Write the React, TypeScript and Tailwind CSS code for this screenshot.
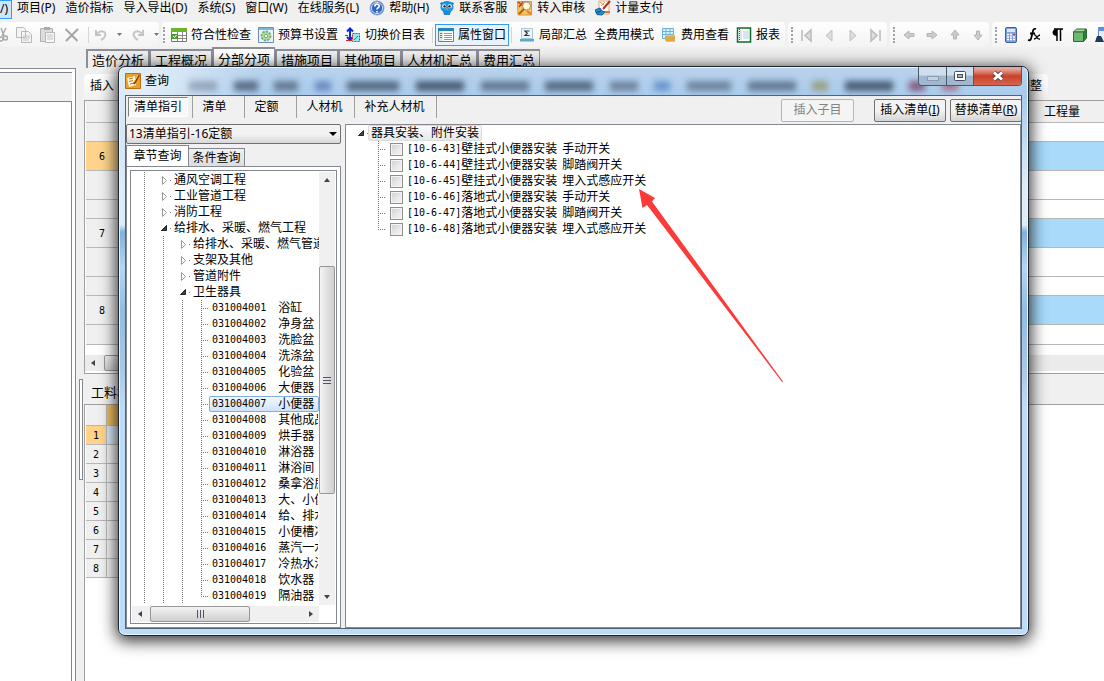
import type { ReactNode } from "react"
import clsx from "clsx"

const topTabs = ["造价分析", "工程概况", "分部分项", "措施项目", "其他项目", "人材机汇总", "费用汇总"]

const gridRows = [
    { h: "h-[19px]" },
    { h: "h-[29px]", no: "6", active: true, blue: true },
    { h: "h-[29px]" },
    { h: "h-[19px]" },
    { h: "h-[29px]", no: "7", blue: true },
    { h: "h-[29px]" },
    { h: "h-[19px]" },
    { h: "h-[29px]", no: "8", blue: true },
    { h: "h-[20px]" },
]

const branches = [
    { level: 1, name: "通风空调工程" },
    { level: 1, name: "工业管道工程" },
    { level: 1, name: "消防工程" },
    { level: 1, name: "给排水、采暖、燃气工程", open: true },
    { level: 2, name: "给排水、采暖、燃气管道" },
    { level: 2, name: "支架及其他" },
    { level: 2, name: "管道附件" },
    { level: 2, name: "卫生器具", open: true },
]

const leaves = [
    "浴缸", "净身盆", "洗脸盆", "洗涤盆", "化验盆", "大便器", "小便器", "其他成品", "烘手器", "淋浴器",
    "淋浴间", "桑拿浴房", "大、小便槽", "给、排水附件", "小便槽冲洗管", "蒸汽一水加热器", "冷热水混合器", "饮水器", "隔油器",
]

const quotas = [
    ["[10-6-43]", "壁挂式小便器安装", "手动开关"],
    ["[10-6-44]", "壁挂式小便器安装", "脚踏阀开关"],
    ["[10-6-45]", "壁挂式小便器安装", "埋入式感应开关"],
    ["[10-6-46]", "落地式小便器安装", "手动开关"],
    ["[10-6-47]", "落地式小便器安装", "脚踏阀开关"],
    ["[10-6-48]", "落地式小便器安装", "埋入式感应开关"],
]

// blurred toolbar showing through the glass title bar
const ghosts = [
    "w-7 bg-slate-600/40", "w-6 bg-slate-700/70", "w-6 bg-slate-700/60", "w-4 bg-[#3c5fa8]/60", "w-13 bg-slate-700/70",
    "w-12 bg-slate-700/80", "w-12 bg-slate-700/60", "w-12 bg-slate-700/70", "w-7 bg-slate-600/60", "w-4 bg-[#3c6fb8]/60",
    "w-11 bg-slate-600/60", "w-12 bg-slate-700/60", "w-4 bg-[#8f8f58]/70", "w-12 bg-slate-700/80", "w-4 bg-[#7a3f68]/80",
    "w-4 bg-[#a04f68]/70",
]

function Mono({ children }: { children: ReactNode }) {
    return <span className="font-['DejaVu_Sans_Mono',monospace] text-[10px]">{children}</span>
}

function Icon({ children, size = 16 }: { children: ReactNode; size?: number }) {
    return (
        <svg width={size} height={size} viewBox="0 0 16 16" fill="none" className="shrink-0" aria-hidden="true">
            {children}
        </svg>
    )
}

function HelpIcon() {
    return (
        <Icon>
            <circle cx="8" cy="8" r="7" fill="#2f63c8" stroke="#8ba6d8" />
            <circle cx="8" cy="8" r="5.6" stroke="#fff" strokeWidth=".8" />
            <path d="M5.8 6.4c0-3 4.6-2.8 4.4-.2C10.100 7.800 8 7.800 8 9.600M8 11v1.600" stroke="#fff" strokeWidth="1.700" />
        </Icon>
    )
}

function MascotIcon() {
    return (
        <Icon>
            <path d="M1 3c2-1 3-1 5 0l-3 4zM15 3c-2-1-3-1-5 0l3 4z" fill="#1672b8" />
            <path d="M8 1c4 0 6.500 2.500 6.500 6S12 12.500 8 12.500 1.500 10.500 1.500 7 4 1 8 1z" fill="#2196de" />
            <path d="M4 11h8l-1 4H5z" fill="#2486cc" />
            <circle cx="5.200" cy="6.200" r="2" fill="#fff" />
            <circle cx="10.800" cy="6.200" r="2" fill="#fff" />
            <circle cx="5.500" cy="6.400" r="1.200" fill="#112" />
            <circle cx="10.500" cy="6.400" r="1.200" fill="#112" />
            <path d="M6.500 8.500h3L8 10z" fill="#f5a623" />
        </Icon>
    )
}

function AuditIcon() {
    return (
        <Icon>
            <path d="M.5 1.500h14v13.500H1z" fill="#f6c35e" stroke="#d9982e" />
            <path d="M1 2l5 4M6 2L2 7" stroke="#c8421a" strokeWidth="1.500" />
            <circle cx="9.500" cy="6" r="4" fill="#fff6dd" stroke="#a39064" />
            <path d="M7 9l-5 5" stroke="#b35a12" strokeWidth="2" />
            <path d="M10 11l4 3" stroke="#e8782a" strokeWidth="2" />
        </Icon>
    )
}

function PayIcon() {
    return (
        <Icon>
            <path d="M4 1h10v13H4z" fill="#fff" stroke="#e0a878" />
            <path d="M5 2l4 3M10 2L6 6" stroke="#e0905a" />
            <path d="M15 1L8 9" stroke="#b8301c" strokeWidth="2" />
            <path d="M0 10l5-2 2 3 3 1-3 3-5-.5z" fill="#2a8fd0" stroke="#135a94" />
            <path d="M1 13l5-2" stroke="#0c5d98" strokeWidth="1.500" />
            <path d="M10 12h5" stroke="#e0782a" strokeWidth="2" />
        </Icon>
    )
}

function TableIcon() {
    return (
        <Icon>
            <path d="M.5 1.500h15v13H.5z" fill="#fff" stroke="#777" />
            <path d="M0 1h16v4H0z" fill="#6cb52a" />
            <path d="M1 8.500h14M1 11.500h14M6.500 5v9M11.500 5v9" stroke="#888" />
            <path d="M1 7h6v5H1z" fill="#4d9a2f" />
            <path d="M2 9l1.500 1.500L5.500 8" stroke="#fff" />
        </Icon>
    )
}

function GearIcon() {
    return (
        <Icon>
            <path d="M.5.500h15v15H.5z" fill="#e8f1f6" stroke="#6b8fb5" />
            <path d="M1 1h14v2H1z" fill="#7db4e0" />
            <circle cx="8" cy="9" r="4.500" fill="#b8dcae" stroke="#6fae68" strokeWidth="1.800" strokeDasharray="2.200 1.200" />
            <circle cx="8" cy="9" r="1.800" fill="#fff" stroke="#6fae68" />
        </Icon>
    )
}

function SwitchIcon() {
    return (
        <Icon>
            <path d="M5 1v13M2 4.500L5 1.500l3 3M2 10l3 3 3-3" stroke="#0a28d8" strokeWidth="2" />
            <path d="M7.500 6.500h7v8h-7z" fill="#8eecf0" stroke="#e02020" strokeDasharray="2 1" />
            <path d="M0 8.500h3M1 13.500h6" stroke="#e02020" />
            <path d="M9 13l4-4" stroke="#138b9b" />
        </Icon>
    )
}

function PropsIcon() {
    return (
        <Icon>
            <path d="M.5 1.500h15v13H.5z" fill="#fff" stroke="#6d7f8f" />
            <path d="M0 1h16v3H0z" fill="#2585b0" />
            <path d="M1 4h4v10H1z" fill="#dce9dc" />
            <path d="M6 6.500h8M6 8.500h8M6 10.500h8M6 12.500h8" stroke="#8d999d" />
            <path d="M2 6.500h2M2 8.500h2M2 10.500h2" stroke="#3d9b4c" />
        </Icon>
    )
}

function SumIcon() {
    return (
        <Icon>
            <path d="M2.500 1.500h11v10h-11z" fill="#eaf6fb" stroke="#a5c7d4" />
            <path d="M10.500 4H6l2.300 2.200L6 8.500h4.500" stroke="#333" strokeWidth="1.200" />
            <path d="M1 12h14v2.500H1z" fill="#58a8d0" />
        </Icon>
    )
}

function CoinsIcon() {
    return (
        <Icon>
            <path d="M1.500 1.500h11v10h-11z" fill="#d9f0fa" stroke="#6ab3d5" />
            <path d="M1 4.500h12M1 7.500h12M5 1v11M9 1v11" stroke="#6ab3d5" />
            <path d="M4 8h10v6H4z" fill="#f5c96a" />
            <path d="M4 10h10M4 12h10M5 14h9" stroke="#c08a2c" />
        </Icon>
    )
}

function ReportIcon() {
    return (
        <Icon>
            <path d="M1.500 1h13v14h-13z" fill="#fff" stroke="#0b6b28" strokeWidth="1.500" />
            <path d="M5 3v10M7 5h6M7 7h6M7 9h6M7 11h6" stroke="#b4c6dc" />
            <path d="M3.500 2v12" stroke="#555" strokeDasharray="1 1" />
        </Icon>
    )
}

function AppIcon() {
    return (
        <Icon>
            <path d="M.5.500h15v15H.5z" fill="#e8a02c" stroke="#c06c10" />
            <path d="M2 5l8-2 1 9-7 2z" fill="#fff8df" />
            <path d="M4 6l4-1M4 8.500l4-1M5 11l4-1" stroke="#b87428" />
            <path d="M14 2l-5 9" stroke="#8a3e06" strokeWidth="2" />
            <path d="M13 2l-4 7" stroke="#ffd45c" />
        </Icon>
    )
}

function Band({ children, className }: { children: ReactNode; className?: string }) {
    return (
        <div className={clsx("flex h-[25px] shrink-0 items-center rounded bg-linear-to-b from-white to-[#f3f3f3]", className)}>
            {children}
        </div>
    )
}

function Grip() {
    return <span className="-mr-px h-4 shrink-0 border-l-2 border-dotted border-gray-400" />
}

function Sep({ className }: { className?: string }) {
    return <span className={clsx("h-4 w-px shrink-0 bg-gray-300", className)} />
}

function ToolButton({ icon, text }: { icon?: ReactNode; text: string }) {
    return (
        <button className="flex shrink-0 items-center gap-1 whitespace-nowrap">
            {icon}
            {text}
        </button>
    )
}

function GlyphButton({ label, children }: { label: string; children: ReactNode }) {
    return (
        <button aria-label={label} className="shrink-0">
            <Icon>{children}</Icon>
        </button>
    )
}

function Caret() {
    return (
        <svg width="5" height="3" className="shrink-0" aria-hidden="true">
            <path d="M0 0h5L2.500 3z" fill="#777" />
        </svg>
    )
}

function Guide({ kind }: { kind: "line" | "tee" | "end" }) {
    const wide = kind !== "line"
    return (
        <svg width={wide ? 17 : 19} height="16" className="shrink-0" aria-hidden="true">
            <path d={kind === "end" ? "M9.500 0v9" : "M9.500 0v16"} stroke="#777" strokeDasharray="1 1" />
            {wide && <path d="M11 8.500h6" stroke="#777" strokeDasharray="1 1" />}
        </svg>
    )
}

function Expander({ open }: { open?: boolean }) {
    return (
        <svg width="17" height="16" className="shrink-0 overflow-visible" aria-hidden="true">
            {open ? <path d="M12.500 5.500v5H7.500z" fill="#444" stroke="#222" /> : <path d="M8.500 4.500v8l4-4z" fill="#fff" stroke="#999" />}
            <path d="M16 8.500h1" stroke="#777" />
        </svg>
    )
}

function ScrollArrow({ d }: { d: string }) {
    return (
        <span className="flex size-4 shrink-0 items-center justify-center">
            <svg width="8" height="8" aria-hidden="true">
                <path d={d} fill="#444" />
            </svg>
        </span>
    )
}

function MenuBar() {
    return (
        <nav className="flex h-[22px] items-start gap-[10px] whitespace-nowrap leading-4">
            <a href="#view" className="h-[19px] w-3 shrink-0 border border-l-0 border-[#3399ff] bg-[#cde6fc]">/)</a>
            <a href="#project" className="-ml-[5px]">项目(P)</a>
            <a href="#index">造价指标</a>
            <a href="#io">导入导出(D)</a>
            <a href="#system">系统(S)</a>
            <a href="#window">窗口(W)</a>
            <a href="#online">在线服务(L)</a>
            <a href="#help" className="flex gap-1"><HelpIcon />帮助(H)</a>
            <a href="#service" className="flex gap-1"><MascotIcon />联系客服</a>
            <a href="#audit" className="flex gap-1"><AuditIcon />转入审核</a>
            <a href="#pay" className="flex gap-1"><PayIcon />计量支付</a>
        </nav>
    )
}

function Toolbar() {
    return (
        <div className="flex gap-[3px] overflow-hidden">
            <Band className="w-[159px] gap-2">
                <div className="flex w-2 shrink-0 justify-end overflow-hidden">
                    <GlyphButton label="剪切">
                        <path d="M9 1l3 8M14 1l-4 8" stroke="#aaa" strokeWidth="1.500" />
                        <circle cx="9" cy="12" r="2" stroke="#aaa" strokeWidth="1.500" />
                        <circle cx="13.500" cy="11" r="2" stroke="#aaa" strokeWidth="1.500" />
                    </GlyphButton>
                </div>
                <GlyphButton label="复制">
                    <path d="M.5.500h7l2 2v8h-9zM5.500 4.500h7l3 3v8h-10z" fill="#f4f4f4" stroke="#b8b8b8" />
                    <path d="M7 9h7M7 11h7M7 13h6" stroke="#c4c4c4" />
                </GlyphButton>
                <GlyphButton label="粘贴">
                    <path d="M.5 1.500h12v13H.5z" fill="#ddd" stroke="#b0b0b0" />
                    <path d="M4 0h6v3H4z" fill="#aaa" />
                    <path d="M5.500 5.500h9v10h-9z" fill="#f8f8f8" stroke="#b8b8b8" />
                    <path d="M7 8h6M7 10h6M7 12h6" stroke="#c4c4c4" />
                </GlyphButton>
                <GlyphButton label="删除">
                    <path d="M1.500 2l12 12M14 2L2 14" stroke="#a5a5a5" strokeWidth="2" />
                </GlyphButton>
                <Sep className="-mr-1" />
                <GlyphButton label="撤销">
                    <path d="M3 3v5h5M4 7c4-5 10-2 8 2-.6 2-2 3-4 4" stroke="#c4c4c4" strokeWidth="2" />
                </GlyphButton>
                <Caret />
                <GlyphButton label="恢复">
                    <path d="M13 3v5H8M12 7C8 2 2 5 4 9c.6 2 2 3 4 4" stroke="#c4c4c4" strokeWidth="2" />
                </GlyphButton>
                <Caret />
            </Band>
            <Band className="gap-[7px] pl-px pr-[5px]">
                <Grip />
                <ToolButton icon={<TableIcon />} text="符合性检查" />
                <ToolButton icon={<GearIcon />} text="预算书设置" />
                <ToolButton icon={<SwitchIcon />} text="切换价目表" />
                <div className="flex items-center gap-0.5">
                    <Sep />
                    <button className="flex h-[22px] items-center gap-1 border border-[#3399ff] bg-[#e8f2fc] px-0.5">
                        <PropsIcon />
                        属性窗口
                    </button>
                    <Sep />
                </div>
                <ToolButton icon={<SumIcon />} text="局部汇总" />
                <ToolButton text="全费用模式" />
                <ToolButton icon={<CoinsIcon />} text="费用查看" />
                <ToolButton icon={<ReportIcon />} text="报表" />
            </Band>
            <Band className="gap-[7px] px-[3px]">
                <Grip />
                <GlyphButton label="首条"><path d="M3 3v11M12 3v11L6 8.500z" fill="#ddd" stroke="#bbb" strokeWidth="1.500" /></GlyphButton>
                <GlyphButton label="上一条"><path d="M10 3v11L4 8.500z" fill="#ddd" stroke="#c0c0c0" /></GlyphButton>
                <GlyphButton label="下一条"><path d="M5 3v11l6-5.500z" fill="#ddd" stroke="#c0c0c0" /></GlyphButton>
                <GlyphButton label="末条"><path d="M12 3v11M3 3v11l6-5.500z" fill="#ddd" stroke="#bbb" strokeWidth="1.500" /></GlyphButton>
            </Band>
            <Band className="gap-[7px] px-[3px]">
                <Grip />
                <GlyphButton label="左移"><path d="M3 8l5-4v2.500h5v3H8V12z" fill="#ccc" stroke="#b4b4b4" /></GlyphButton>
                <GlyphButton label="右移"><path d="M13 8L8 4v2.500H3v3h5V12z" fill="#ccc" stroke="#b4b4b4" /></GlyphButton>
                <GlyphButton label="上移"><path d="M8 3l4 5H9.500v4h-3V8H4z" fill="#ccc" stroke="#b4b4b4" /></GlyphButton>
                <GlyphButton label="下移"><path d="M8 13l4-5H9.500V4h-3v4H4z" fill="#ccc" stroke="#b4b4b4" /></GlyphButton>
            </Band>
            <Band className="grow gap-[7px] pl-[3px]">
                <Grip />
                <GlyphButton label="计算器">
                    <rect x="2.500" y=".5" width="11" height="15" rx="1.500" fill="#7fa0dc" stroke="#3f5f9f" />
                    <path d="M4 2h8v3H4z" fill="#dbe8fb" />
                    <path d="M4 7.500h8M4 10h8M4 12.500h8" stroke="#fff" strokeWidth="1.500" strokeDasharray="2 1" />
                    <path d="M10 7.500h2" stroke="#e03030" strokeWidth="1.500" />
                </GlyphButton>
                <GlyphButton label="函数">
                    <path d="M10 2c-3-1-3 2-4 6s-1 6-4 5M4 6.500h5" stroke="#000" strokeWidth="1.800" />
                    <path d="M8 8c3-1 2 5 6 4M14 8c-2 0-3 4-6 4" stroke="#000" strokeWidth="1.300" />
                </GlyphButton>
                <GlyphButton label="段落标记">
                    <path d="M8 2v12M11.500 2v12M5 2h9" stroke="#000" strokeWidth="1.500" />
                    <path d="M8 2v7C2 9 2 2 8 2z" fill="#000" />
                </GlyphButton>
                <GlyphButton label="三维">
                    <path d="M1.500 5l3-3h10l-3 3z" fill="#a8dba0" stroke="#2f6a35" />
                    <path d="M1.500 5h10v9.500h-10z" fill="#6fb872" stroke="#2f6a35" />
                    <path d="M11.500 5l3-3v9l-3 3.500z" fill="#2f7a3a" stroke="#2f6a35" />
                </GlyphButton>
                <GlyphButton label="查找">
                    <path d="M3.500.5h12v14h-12z" fill="#e4eefc" stroke="#5f86c8" />
                    <path d="M3 1h13v3H3z" fill="#5f8fe0" />
                    <path d="M0 15l2-6h4l3 6z" fill="#223a52" />
                </GlyphButton>
            </Band>
        </div>
    )
}

function LeftPanel() {
    return (
        <div className="mt-[21px] flex w-[76px] shrink-0 flex-col border-r border-t border-[#828790] bg-white pr-[3px] pt-[3px]">
            <div className="h-[29px] border-t border-[#828790] bg-[#f0f0f0]" />
            <div className="grow border-r border-t border-[#828790]" />
        </div>
    )
}

function MainArea() {
    return (
        <main className="flex min-w-0 grow flex-col">
            <div className="flex h-[21px] shrink-0 items-end pl-0.5">
                {topTabs.map((tab) => (
                    <button
                        key={tab}
                        className={clsx(
                            "whitespace-nowrap border-l-2 border-r border-t-2 border-[#8d8f98] px-1 pt-px text-[13px] leading-4",
                            tab === "分部分项" ? "h-[21px] bg-white" : "h-[19px] bg-[#efefef]"
                        )}
                    >
                        {tab}
                    </button>
                ))}
            </div>
            <div className="mb-0.5 mr-14 mt-1.5 flex h-6 shrink-0 items-center justify-between rounded bg-linear-to-b from-white to-[#f2f2f2] px-[6px]">
                <button>插入</button>
                <button>调整</button>
            </div>
            <div className="flex h-[274px] shrink-0 flex-col border-y border-l border-[#a0a0a0] bg-white">
                <table className="w-full table-fixed border-separate border-spacing-0 pl-px">
                    <thead>
                        <tr className="h-[22px] bg-[#f0f0f0]">
                            <th className="w-8 border-b border-[#b8b8b8]" />
                            <th className="border-b border-[#b8b8b8]" />
                            <th className="w-[60px] border-b border-[#b8b8b8] p-0 text-left font-normal leading-4">工程量</th>
                        </tr>
                    </thead>
                    <tbody>
                        {gridRows.map((row, i) => (
                            <tr key={i} className={clsx(row.h, row.blue && "bg-[#a9dafa]")}>
                                <td className={clsx("border-b border-[#b8b8b8] p-0 text-center leading-4", row.active ? "bg-[#ffd48a]" : "bg-[#f0f0f0]")}>
                                    {row.no && <Mono>{row.no}</Mono>}
                                </td>
                                <td className="border-b border-[#b8b8b8] p-0" />
                                <td className="border-b border-[#b8b8b8] p-0" />
                            </tr>
                        ))}
                    </tbody>
                </table>
                <div className="mt-auto mb-0.5 flex h-4 bg-[#ebebeb]">
                    <ScrollArrow d="M6 1v6L2 4z" />
                    <div className="ml-[3px] w-60 rounded-xs border border-[#979797] bg-linear-to-b from-[#f3f3f3] to-[#cfcfcf]" />
                </div>
            </div>
            <div className="flex h-[30px] shrink-0 items-center pl-[7px] pt-1.5 text-[13px] leading-4">工料机显示</div>
            <div className="grow border-l border-t border-[#a0a0a0] bg-white">
                <table className="table-fixed border-separate border-spacing-0 pl-px">
                    <thead>
                        <tr className="h-[21px]">
                            <th className="w-[21px] border-b border-r border-[#b8b8b8] bg-[#f0f0f0] p-0" />
                            <th className="w-25 border-b border-[#b8b8b8] bg-linear-to-r from-[#eebf5e] to-[#f6cd80] p-0" />
                        </tr>
                    </thead>
                    <tbody>
                        {[1, 2, 3, 4, 5, 6, 7, 8].map((n) => (
                            <tr key={n} className="h-[19px]">
                                <td className={clsx("border-b border-r border-[#b8b8b8] p-0 text-center leading-4", n === 1 ? "bg-[#ffd48a]" : "bg-[#f0f0f0]")}>
                                    <Mono>{n}</Mono>
                                </td>
                                <td className={clsx("border-b border-[#b8b8b8] p-0", n === 1 ? "bg-[#dcebfa]" : "bg-[#f6f6f6]")} />
                            </tr>
                        ))}
                    </tbody>
                </table>
            </div>
        </main>
    )
}

function ChapterTree() {
    return (
        <div className="flex h-full flex-col border border-[#828790] bg-white p-px">
            <div className="flex min-h-0 grow">
                <ul className="min-w-0 grow overflow-hidden whitespace-nowrap pl-[3px] leading-4">
                    {branches.map((b) => (
                        <li key={b.name} className="flex h-4">
                            <Guide kind="line" />
                            {b.level === 2 && <Guide kind="line" />}
                            <Expander open={b.open} />
                            <span className="px-[3px]">{b.name}</span>
                        </li>
                    ))}
                    {leaves.map((name, i) => (
                        <li key={name} className="flex h-4">
                            <Guide kind="line" />
                            <Guide kind="line" />
                            <Guide kind="line" />
                            <Guide kind={i === leaves.length - 1 ? "end" : "tee"} />
                            <span
                                className={clsx(
                                    "flex min-w-0 grow gap-3 overflow-hidden border px-0.5 leading-[14px]",
                                    name === "小便器" ? "rounded-xs border-[#84acdd] bg-linear-to-b from-[#f2f7fe] to-[#cfe3fb]" : "border-transparent"
                                )}
                            >
                                <Mono>{`031004${String(i + 1).padStart(3, "0")}`}</Mono>
                                <span>{name}</span>
                            </span>
                        </li>
                    ))}
                </ul>
                <div className="flex w-4 shrink-0 flex-col bg-[#f0f0f0]">
                    <ScrollArrow d="M1 6h6L4 2z" />
                    <div className="mt-[78px] flex h-57 flex-col items-center justify-center gap-0.5 rounded-xs border border-[#979797] bg-linear-to-r from-[#f3f3f3] to-[#cfcfcf]">
                        <span className="h-px w-2 bg-gray-600" />
                        <span className="h-px w-2 bg-gray-600" />
                        <span className="h-px w-2 bg-gray-600" />
                    </div>
                    <div className="mt-auto"><ScrollArrow d="M1 2h6L4 6z" /></div>
                </div>
            </div>
            <div className="mr-4 mt-px flex h-4 shrink-0 bg-[#f0f0f0]">
                <ScrollArrow d="M6 1v6L2 4z" />
                <div className="ml-0.5 flex w-25 items-center justify-center gap-0.5 rounded-xs border border-[#979797] bg-linear-to-b from-[#f3f3f3] to-[#cfcfcf]">
                    <span className="h-2 w-px bg-gray-600" />
                    <span className="h-2 w-px bg-gray-600" />
                    <span className="h-2 w-px bg-gray-600" />
                </div>
                <div className="ml-auto"><ScrollArrow d="M2 1v6l4-3z" /></div>
            </div>
        </div>
    )
}

function QuotaTree() {
    return (
        <section className="min-w-0 grow border border-[#828790] bg-white">
            <div className="flex h-4 items-center pl-[5px]">
                <Expander open />
                <span className="rounded-xs border border-[#dcdcdc] bg-linear-to-b from-[#fafafa] to-[#e8e8e8] px-0.5 leading-[14px]">器具安装、附件安装</span>
            </div>
            <ul className="pl-[23px] leading-4">
                {quotas.map(([code, name, kind], i) => (
                    <li key={code} className="flex h-4 items-center">
                        <Guide kind={i === quotas.length - 1 ? "end" : "tee"} />
                        <label className="ml-1 flex items-center whitespace-nowrap">
                            <input
                                type="checkbox"
                                className="mr-1 size-[13px] appearance-none border border-[#8e8f8f] bg-linear-to-br from-[#cfd3d8] to-[#f8f8f8] shadow-[inset_0_0_0_1px_#f4f4f4]"
                            />
                            <Mono>{code}</Mono>
                            <span className="mr-[5px]">{name}</span>
                            <span>{kind}</span>
                        </label>
                    </li>
                ))}
            </ul>
        </section>
    )
}

function TitleBar() {
    return (
        <div className="relative flex h-7 shrink-0 items-start">
            <div className="absolute inset-x-16 top-3.5 flex justify-between blur-[3px]" aria-hidden="true">
                {ghosts.map((g, i) => (
                    <span key={i} className={clsx("h-2.5", g)} />
                ))}
            </div>
            <div className="relative flex items-center gap-1 pt-1.5 leading-4">
                <AppIcon />
                <h2>查询</h2>
            </div>
            <div className="relative ml-auto flex h-[19px] overflow-hidden rounded-b border border-t-0 border-[#4b5a6b]">
                <button aria-label="最小化" className="flex w-7 items-end justify-center border-r border-[#4b5a6b] bg-linear-to-b from-[#cfdeee] from-45% to-[#9fb7cf] to-50% pb-1">
                    <svg width="12" height="5" aria-hidden="true"><rect x=".5" y=".5" width="11" height="4" fill="#c5d2df" stroke="#8a9db0" /></svg>
                </button>
                <button aria-label="最大化" className="flex w-[27px] items-center justify-center border-r border-[#4b5a6b] bg-linear-to-b from-[#cfdeee] from-45% to-[#9fb7cf] to-50%">
                    <svg width="12" height="10" aria-hidden="true">
                        <rect x=".5" y=".5" width="11" height="9" rx="1" fill="#fff" stroke="#444e5c" />
                        <rect x="3.500" y="3.500" width="5" height="3" fill="#9fb7cf" stroke="#444e5c" />
                    </svg>
                </button>
                <button aria-label="关闭" className="flex w-[47px] items-center justify-center bg-linear-to-b from-[#e5a79c] from-10% via-[#c8402a] via-50% to-[#d9644a]">
                    <svg width="14" height="12" aria-hidden="true">
                        <path d="M3 2.500l8 7M11 2.500l-8 7" stroke="#5a4a52" strokeWidth="4.500" />
                        <path d="M3 2.500l8 7M11 2.500l-8 7" stroke="#fff" strokeWidth="2.800" />
                    </svg>
                </button>
            </div>
        </div>
    )
}

function QueryDialog() {
    const action = "h-[23px] w-[72px] shrink-0 whitespace-nowrap rounded-xs border border-[#707070] bg-linear-to-b from-[#f3f3f3] from-50% to-[#d4d4d4] leading-4"
    return (
        <div
            role="dialog"
            aria-label="查询"
            className="absolute bottom-[45px] left-[118px] right-[75px] top-[66px] flex flex-col rounded-[7px] border border-[#20262e] bg-[radial-gradient(circle_at_20px_20px,rgba(235,244,252,0.9)_0,rgba(235,244,252,0)_120px),linear-gradient(180deg,#b9d3ec_0,#a9cbed_30px,#dcecfa_120px,#dcecfa_158px,#7fb2de_165px,#b4d6f5_200px,#8fbde6_245px,#a9c8e6_300px,#bcdcfa_340px)] px-1.5 pb-1.5 shadow-[inset_0_0_0_1px_#e8f4ff,0_3px_16px_2px_rgba(0,0,0,0.8)]"
        >
            <TitleBar />
            <div className="flex min-h-0 grow flex-col border border-[#56626f] bg-[#f0f0f0]">
                <div className="flex h-7 shrink-0 items-center overflow-hidden">
                    <div className="flex h-[22px] self-start whitespace-nowrap leading-4">
                        <div className="border-r border-[#a0a0a0] pl-0.5 pr-1 pt-px">
                            <button className="h-5 border border-b-white border-l-[#808080] border-r-white border-t-[#808080] bg-[#f8f8f8] px-[5px]">清单指引</button>
                        </div>
                        <button className="w-[52px] border-r border-[#a0a0a0] pr-2">清单</button>
                        <button className="w-[52px] border-r border-[#a0a0a0] pr-2">定额</button>
                        <button className="w-[58px] border-r border-[#a0a0a0] pr-0.5">人材机</button>
                        <button className="w-[82px] border-r border-[#a0a0a0] pr-0.5">补充人材机</button>
                    </div>
                    <div className="-mr-px ml-auto flex items-center">
                        <button disabled className="mr-5 h-[23px] w-[73px] rounded-xs border border-[#b5b5b5] bg-[#f4f4f4] leading-4 text-[#838383]">插入子目</button>
                        <button className={clsx(action, "mr-1")}>插入清单(<u>I</u>)</button>
                        <button className={action}>替换清单(<u>R</u>)</button>
                    </div>
                </div>
                <div className="flex min-h-0 grow gap-1">
                    <div className="flex w-[215px] shrink-0 flex-col">
                        <div className="relative">
                            <select
                                aria-label="清单指引"
                                className="block h-5 w-full appearance-none rounded-xs border border-[#707070] bg-linear-to-b from-[#f3f3f3] from-50% to-[#d8d8d8] pl-0.5 leading-4"
                            >
                                <option>13清单指引-16定额</option>
                            </select>
                            <svg width="8" height="4" className="pointer-events-none absolute right-1 top-2" aria-hidden="true"><path d="M0 0h8L4 4z" fill="#000" /></svg>
                        </div>
                        <div className="mt-px flex h-[21px] shrink-0 items-end leading-4">
                            <button className="h-[21px] w-[63px] border border-b-0 border-[#828790] bg-white">章节查询</button>
                            <button className="h-[18px] w-14 border border-b-0 border-l-0 border-[#828790] bg-linear-to-b from-[#f0f0f0] to-[#dcdcdc]">条件查询</button>
                        </div>
                        <div className="min-h-0 grow border border-[#828790] bg-white p-[3px]">
                            <ChapterTree />
                        </div>
                    </div>
                    <QuotaTree />
                </div>
            </div>
        </div>
    )
}

export default function App() {
    return (
        <div className="relative flex h-screen flex-col overflow-hidden bg-[#f0f0f0] font-['Noto_Sans','Noto_Sans_CJK_SC',sans-serif] text-xs text-black">
            <MenuBar />
            <Toolbar />
            <div className="flex min-h-0 grow">
                <LeftPanel />
                <div className="mt-[21px] w-2 shrink-0 pl-[3px] pt-[311px]">
                    <div className="h-[101px] w-1 border border-[#828790] bg-white" />
                </div>
                <MainArea />
            </div>
            <QueryDialog />
            <svg width="144" height="194" className="pointer-events-none absolute left-[639px] top-[189px]" aria-hidden="true">
                <path d="M0 0L16 9l-3 3.500L144 192.500l-.8.7L8 16l-4.500 3z" fill="#fc3a3a" />
            </svg>
        </div>
    )
}
